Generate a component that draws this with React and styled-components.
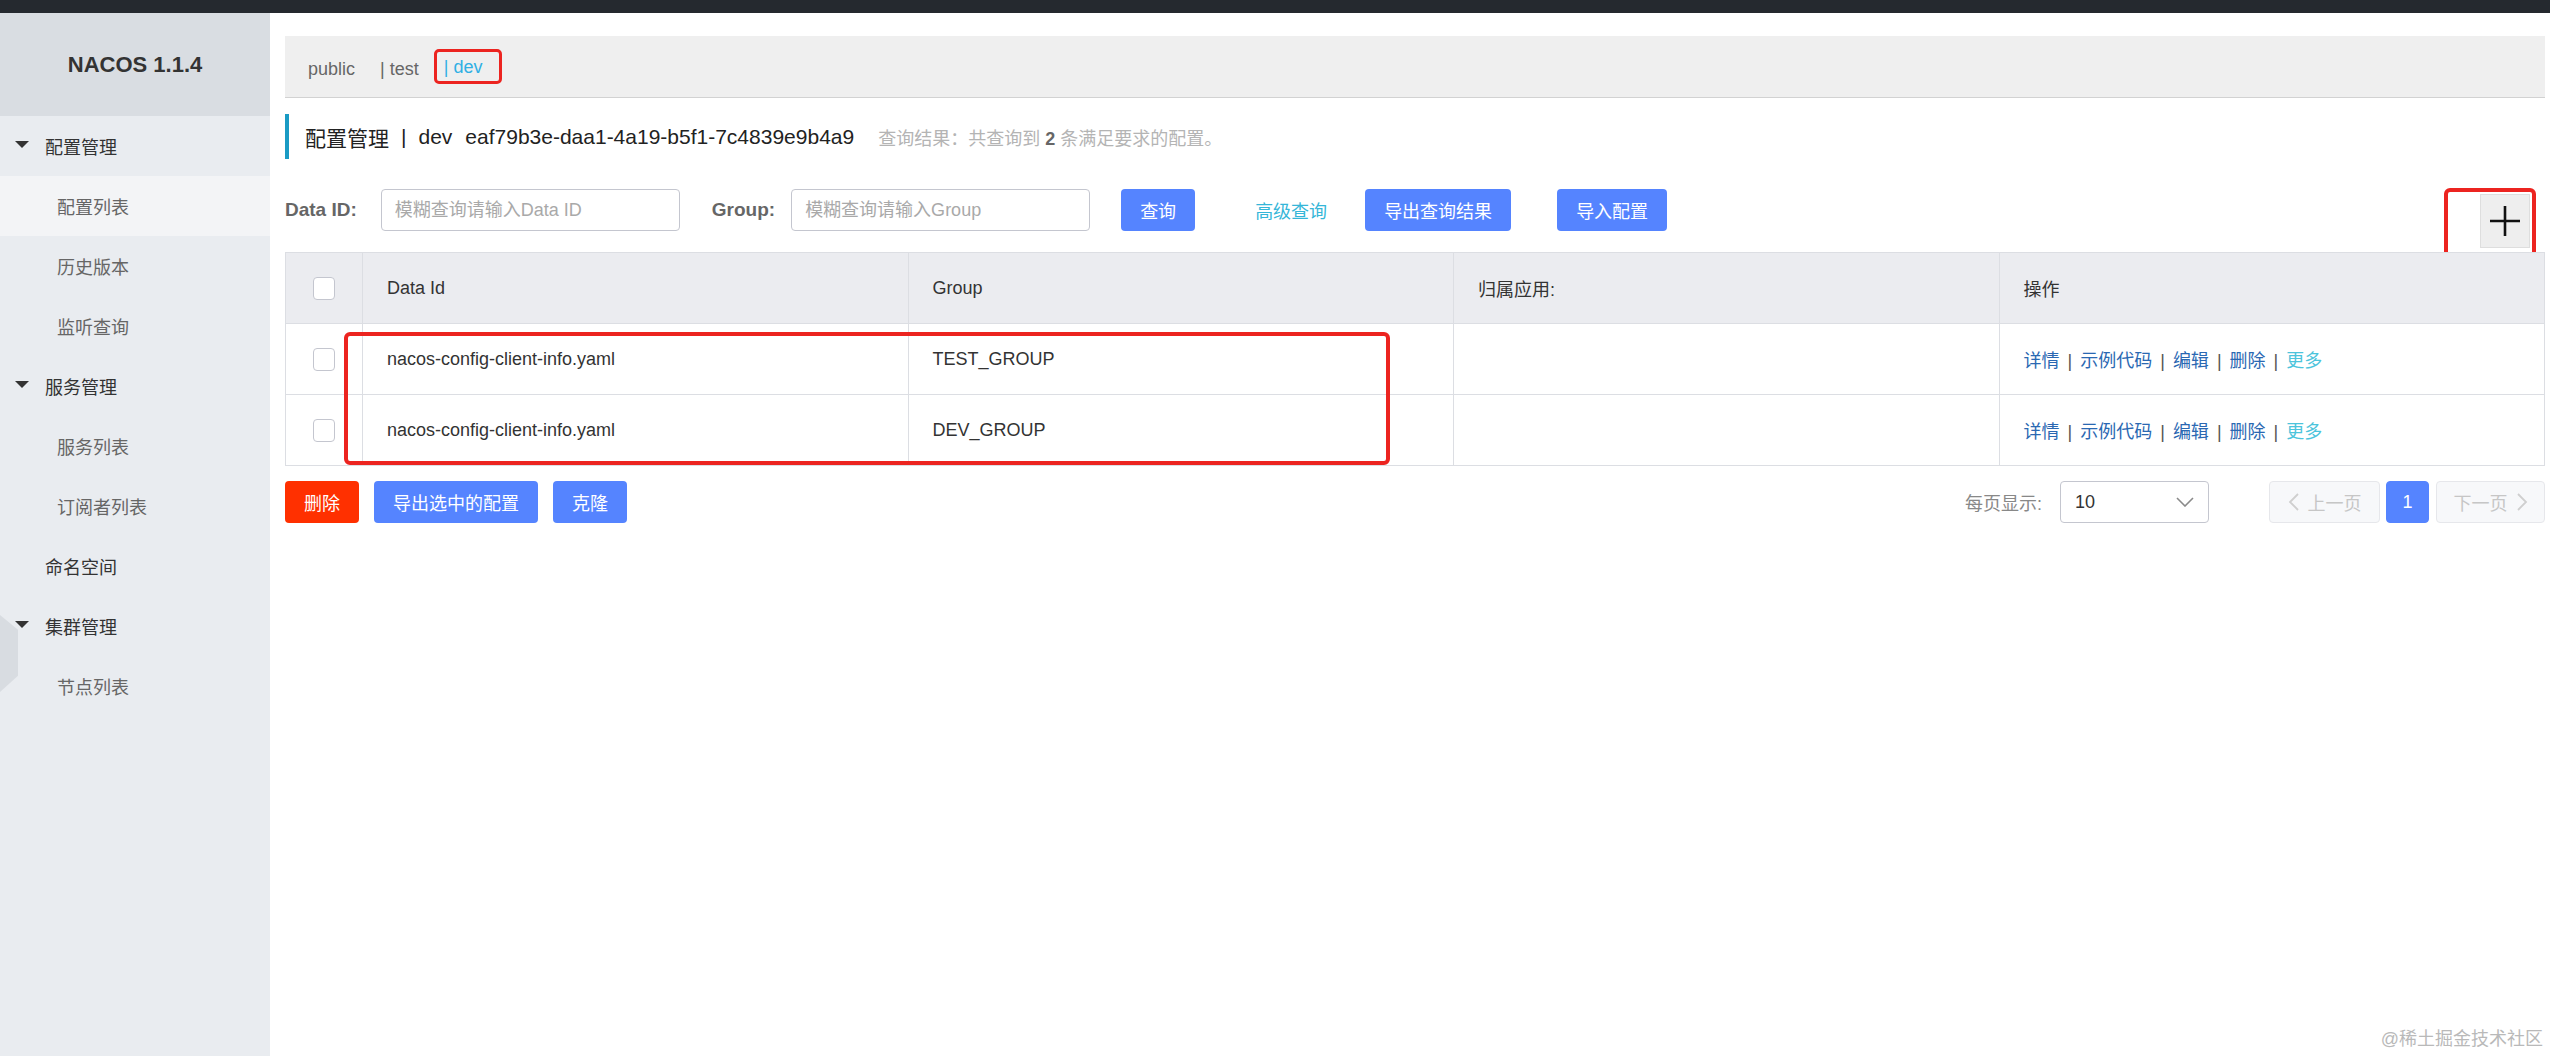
import React from 'react';
import styled, { createGlobalStyle } from 'styled-components';

const GlobalStyle = createGlobalStyle`
  html, body { margin: 0; padding: 0; }
  body {
    font-family: "Liberation Sans", "Noto Sans CJK SC", sans-serif;
    background: #fff;
    color: #333;
  }
  * { box-sizing: border-box; }
`;

const Page = styled.div`
  position: relative;
  min-height: 100vh;
  display: flex;
  flex-direction: column;
`;

const TopBar = styled.div`
  height: 13px;
  flex-shrink: 0;
  background: #25292f;
`;

const Body = styled.div`
  flex: 1;
  display: flex;
`;

const Sidebar = styled.aside`
  position: relative;
  width: 270px;
  flex-shrink: 0;
  background: #e9ecf0;
`;

const Logo = styled.div`
  height: 103px;
  background: #d9dde2;
  display: flex;
  align-items: center;
  justify-content: center;
  font-size: 22px;
  font-weight: bold;
  color: #333;
`;

const MenuItem = styled.div`
  height: 60px;
  display: flex;
  align-items: center;
  padding-left: ${p => (p.$type === 'group' ? 15 : p.$type === 'single' ? 45 : 57)}px;
  font-size: 18px;
  color: ${p => (p.$type === 'child' ? '#666' : '#333')};
  background: ${p => (p.$active ? '#f3f4f6' : 'transparent')};
`;

const Caret = styled.span`
  width: 0;
  height: 0;
  border-left: 7px solid transparent;
  border-right: 7px solid transparent;
  border-top: 7px solid #333;
  margin-right: 16px;
  margin-bottom: 3px;
`;

const EdgeTab = styled.div`
  position: absolute;
  left: 0;
  top: 602px;
  width: 18px;
  height: 77px;
  background: #d8dce1;
  clip-path: polygon(0 0, 100% 19%, 100% 79%, 0 100%);
`;

const Main = styled.main`
  flex: 1;
  min-width: 0;
  padding: 23px 5px 0 15px;
  display: flex;
  flex-direction: column;
`;

const NamespaceBar = styled.div`
  height: 62px;
  background: #efefef;
  border-bottom: 1px solid #d2d2d2;
  display: flex;
  align-items: center;
  padding: 5px 0 0 23px;
  font-size: 18px;
  color: #666;
`;

const NsItem = styled.span`
  margin-right: ${p => p.$mr || 0}px;
  color: ${p => (p.$active ? '#2fb0e4' : '#666')};
`;

const NsMark = styled.span`
  display: inline-flex;
  align-items: center;
  height: 35px;
  margin-left: 15px;
  margin-top: -6px;
  padding: 3px 17px 0 7px;
  border: 3px solid #ec2420;
  border-radius: 5px;
`;

const TitleRow = styled.div`
  margin-top: 16px;
  height: 45px;
  border-left: 4px solid #1a9bc4;
  padding-left: 16px;
  display: flex;
  align-items: center;
  font-size: 21px;
  color: #222;
`;

const TitleSep = styled.span`
  margin: 0 12px;
`;

const TitleId = styled.span`
  margin-left: 13px;
`;

const Summary = styled.span`
  margin-left: 24px;
  font-size: 18px;
  color: #b4b4b4;
`;

const SummaryCount = styled.b`
  color: #666;
  margin: 0 5px;
`;

const SearchRow = styled.div`
  position: relative;
  margin-top: 30px;
  height: 42px;
  display: flex;
  align-items: center;
`;

const FieldLabel = styled.label`
  font-size: 19px;
  font-weight: bold;
  color: #666;
  margin-left: ${p => p.$ml || 0}px;
  margin-right: ${p => p.$mr || 0}px;
`;

const TextInput = styled.input`
  width: 299px;
  height: 42px;
  border: 1px solid #c4c6cf;
  border-radius: 4px;
  padding: 0 13px;
  font-family: inherit;
  font-size: 18px;
  color: #333;
  outline: none;
  &::placeholder { color: #a9a9a9; }
`;

const Button = styled.button`
  height: 42px;
  padding: 0 19px;
  margin-left: ${p => p.$ml || 0}px;
  border: none;
  border-radius: 4px;
  font-family: inherit;
  font-size: 18px;
  color: #fff;
  background: ${p => (p.$danger ? '#ff3000' : '#5584ff')};
  cursor: pointer;
`;

const TextLink = styled.a`
  margin-left: ${p => p.$ml || 0}px;
  font-size: 18px;
  color: #35b6d8;
  cursor: pointer;
`;

const PlusMark = styled.div`
  position: absolute;
  right: 9px;
  top: -1px;
  width: 92px;
  height: 70px;
  border: 4px solid #ec2420;
  border-radius: 6px;
  display: flex;
  justify-content: flex-end;
  padding: 2px 2px 0 0;
`;

const PlusButton = styled.button`
  width: 50px;
  height: 54px;
  background: #eee;
  border: 1px solid #dedede;
  padding: 0;
  display: flex;
  align-items: center;
  justify-content: center;
`;

const TableWrap = styled.div`
  position: relative;
  margin-top: 21px;
`;

const Table = styled.table`
  width: 100%;
  border-collapse: collapse;
  table-layout: fixed;
  font-size: 18px;
  color: #333;
`;

const CheckCol = styled.col`
  width: 77px;
`;

const Row = styled.tr`
  height: 71px;
`;

const HeadCell = styled.th`
  background: #ebecf0;
  border: 1px solid #dcdee3;
  text-align: ${p => (p.$center ? 'center' : 'left')};
  font-weight: normal;
  padding: ${p => (p.$center ? '0' : '0 24px')};
`;

const Cell = styled.td`
  border: 1px solid #dcdee3;
  text-align: ${p => (p.$center ? 'center' : 'left')};
  padding: ${p => (p.$center ? '0' : '0 24px')};
  white-space: nowrap;
`;

const CheckBox = styled.span`
  display: inline-block;
  vertical-align: middle;
  width: 22px;
  height: 23px;
  background: #fff;
  border: 1px solid #c4c6cf;
  border-radius: 4px;
`;

const OpLink = styled.a`
  color: ${p => (p.$light ? '#4cc4dc' : '#2a68b2')};
  cursor: pointer;
`;

const OpSep = styled.span`
  color: #555;
  margin: 0 8px;
`;

const RowsMark = styled.div`
  position: absolute;
  left: 59px;
  top: 80px;
  width: 1046px;
  height: 133px;
  border: 4px solid #ec2420;
  border-radius: 6px;
  pointer-events: none;
`;

const FooterRow = styled.div`
  margin-top: 15px;
  height: 42px;
  display: flex;
  align-items: center;
  gap: 15px;
`;

const Pager = styled.div`
  margin-left: auto;
  display: flex;
  align-items: center;
`;

const PageSizeLabel = styled.span`
  font-size: 18px;
  color: #888;
  margin-right: 18px;
`;

const Select = styled.div`
  width: 149px;
  height: 42px;
  border: 1px solid #c4c6cf;
  border-radius: 4px;
  padding: 0 14px;
  display: flex;
  align-items: center;
  justify-content: space-between;
  font-size: 18px;
  color: #333;
`;

const PageButton = styled.button`
  height: 42px;
  width: ${p => p.$w}px;
  margin-left: ${p => p.$ml || 0}px;
  border: 1px solid ${p => (p.$current ? '#5584ff' : '#e6e7eb')};
  border-radius: 4px;
  background: ${p => (p.$current ? '#5584ff' : '#f7f8fa')};
  color: ${p => (p.$current ? '#fff' : '#c6c6c6')};
  font-family: inherit;
  font-size: 18px;
  display: flex;
  align-items: center;
  justify-content: center;
  gap: 9px;
  padding: 0;
`;

const Watermark = styled.div`
  position: absolute;
  right: 7px;
  bottom: 6px;
  font-size: 18px;
  color: #b9b9b9;
`;

const menu = [
  { label: '配置管理', type: 'group' },
  { label: '配置列表', type: 'child', active: true },
  { label: '历史版本', type: 'child' },
  { label: '监听查询', type: 'child' },
  { label: '服务管理', type: 'group' },
  { label: '服务列表', type: 'child' },
  { label: '订阅者列表', type: 'child' },
  { label: '命名空间', type: 'single' },
  { label: '集群管理', type: 'group' },
  { label: '节点列表', type: 'child' },
];

const rows = [
  { id: 'nacos-config-client-info.yaml', group: 'TEST_GROUP' },
  { id: 'nacos-config-client-info.yaml', group: 'DEV_GROUP' },
];

const ChevronDown = () => (
  <svg width="18" height="10" viewBox="0 0 18 10" fill="none">
    <path d="M1 1 L9 9 L17 1" stroke="#8a8a8a" strokeWidth="1.6" />
  </svg>
);

const ChevronLeft = () => (
  <svg width="11" height="18" viewBox="0 0 11 18" fill="none">
    <path d="M10 1 L2 9 L10 17" stroke="#cfcfcf" strokeWidth="1.8" />
  </svg>
);

const ChevronRight = () => (
  <svg width="11" height="18" viewBox="0 0 11 18" fill="none">
    <path d="M1 1 L9 9 L1 17" stroke="#cfcfcf" strokeWidth="1.8" />
  </svg>
);

const PlusIcon = () => (
  <svg width="30" height="30" viewBox="0 0 30 30">
    <path d="M15 0 V30 M0 15 H30" stroke="#111" strokeWidth="2.6" />
  </svg>
);

export default function App() {
  return (
    <Page>
      <GlobalStyle />
      <TopBar />
      <Body>
        <Sidebar>
          <Logo>NACOS 1.1.4</Logo>
          {menu.map((m, i) => (
            <MenuItem key={i} $type={m.type} $active={m.active}>
              {m.type === 'group' && <Caret />}
              {m.label}
            </MenuItem>
          ))}
          <EdgeTab />
        </Sidebar>
        <Main>
          <NamespaceBar>
            <NsItem $mr={25}>public</NsItem>
            <NsItem>| test</NsItem>
            <NsMark>
              <NsItem $active>| dev</NsItem>
            </NsMark>
          </NamespaceBar>

          <TitleRow>
            <span>配置管理</span>
            <TitleSep>|</TitleSep>
            <span>dev</span>
            <TitleId>eaf79b3e-daa1-4a19-b5f1-7c4839e9b4a9</TitleId>
            <Summary>
              查询结果：共查询到<SummaryCount>2</SummaryCount>条满足要求的配置。
            </Summary>
          </TitleRow>

          <SearchRow>
            <FieldLabel $mr={24}>Data ID:</FieldLabel>
            <TextInput placeholder="模糊查询请输入Data ID" />
            <FieldLabel $ml={32} $mr={16}>Group:</FieldLabel>
            <TextInput placeholder="模糊查询请输入Group" />
            <Button $ml={31}>查询</Button>
            <TextLink $ml={60}>高级查询</TextLink>
            <Button $ml={38}>导出查询结果</Button>
            <Button $ml={46}>导入配置</Button>
            <PlusMark>
              <PlusButton>
                <PlusIcon />
              </PlusButton>
            </PlusMark>
          </SearchRow>

          <TableWrap>
            <Table>
              <colgroup>
                <CheckCol />
                <col />
                <col />
                <col />
                <col />
              </colgroup>
              <thead>
                <Row>
                  <HeadCell $center><CheckBox /></HeadCell>
                  <HeadCell>Data Id</HeadCell>
                  <HeadCell>Group</HeadCell>
                  <HeadCell>归属应用:</HeadCell>
                  <HeadCell>操作</HeadCell>
                </Row>
              </thead>
              <tbody>
                {rows.map((r, i) => (
                  <Row key={i}>
                    <Cell $center><CheckBox /></Cell>
                    <Cell>{r.id}</Cell>
                    <Cell>{r.group}</Cell>
                    <Cell />
                    <Cell>
                      <OpLink>详情</OpLink>
                      <OpSep>|</OpSep>
                      <OpLink>示例代码</OpLink>
                      <OpSep>|</OpSep>
                      <OpLink>编辑</OpLink>
                      <OpSep>|</OpSep>
                      <OpLink>删除</OpLink>
                      <OpSep>|</OpSep>
                      <OpLink $light>更多</OpLink>
                    </Cell>
                  </Row>
                ))}
              </tbody>
            </Table>
            <RowsMark />
          </TableWrap>

          <FooterRow>
            <Button $danger>删除</Button>
            <Button>导出选中的配置</Button>
            <Button>克隆</Button>
            <Pager>
              <PageSizeLabel>每页显示:</PageSizeLabel>
              <Select>
                <span>10</span>
                <ChevronDown />
              </Select>
              <PageButton $w={111} $ml={60}>
                <ChevronLeft />
                上一页
              </PageButton>
              <PageButton $w={43} $ml={6} $current>1</PageButton>
              <PageButton $w={109} $ml={7}>
                下一页
                <ChevronRight />
              </PageButton>
            </Pager>
          </FooterRow>
        </Main>
      </Body>
      <Watermark>@稀土掘金技术社区</Watermark>
    </Page>
  );
}
